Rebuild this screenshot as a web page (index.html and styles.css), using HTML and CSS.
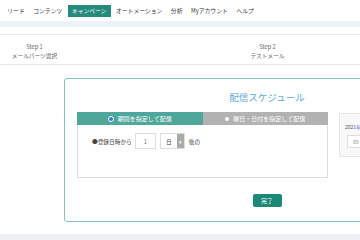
FILE: index.html
```html
<!DOCTYPE html>
<html lang="ja">
<head>
  <meta charset="UTF-8">
  <meta name="viewport" content="width=device-width, initial-scale=1.0">
  <title>配信スケジュール</title>
  <link rel="stylesheet" href="styles.css">
</head>
<body>
  <nav class="nav">
    <a class="nav-item">リード</a>
    <a class="nav-item">コンテンツ</a>
    <a class="nav-item active">キャンペーン</a>
    <a class="nav-item">オートメーション</a>
    <a class="nav-item">分析</a>
    <a class="nav-item">Myアカウント</a>
    <a class="nav-item">ヘルプ</a>
  </nav>
  <div class="nav-band"></div>

  <div class="steps">
    <div class="steps-row">
      <div class="step">
        <p class="step-no">Step 1</p>
        <p class="step-name">メールパーツ選択</p>
      </div>
      <div class="step">
        <p class="step-no">Step 2</p>
        <p class="step-name">テストメール</p>
      </div>
    </div>
  </div>

  <div class="card">
    <h2 class="card-title">配信スケジュール</h2>
    <div class="card-body">
      <div class="schedule">
        <div class="tabs">
          <div class="tab tab-on"><span class="radio radio-on"></span>期間を指定して配信</div>
          <div class="tab tab-off"><span class="radio radio-off"></span>曜日・日付を指定して配信</div>
        </div>
        <div class="tab-panel">
          <div class="row">
            <span>●登録日時から</span>
            <span class="num-box">1</span>
            <span class="select-box"><span class="select-val">日</span><span class="select-arrow">▾</span></span>
            <span>後の</span>
          </div>
        </div>
      </div>
      <div class="side">
        <p class="side-year">2021<span class="side-unit">年</span></p>
        <span class="side-input">09</span>
      </div>
    </div>
    <div class="actions">
      <button class="btn-done">完了</button>
    </div>
  </div>

  <div class="footer-band"></div>
</body>
</html>
```

FILE: styles.css
```css
body {
  font-family: "Noto Sans CJK JP", "Noto Sans", sans-serif;
  margin: 0;
  padding: 0;
  background-color: white;
  color: #333;
  width: 360px;
  height: 240px;
  overflow: hidden;
}
p {
  margin: 0;
}

/* ナビ */
.nav {
  height: 21px;
  display: flex;
  align-items: center;
  padding-left: 3px;
  font-size: 5.8px;
}
.nav-item {
  padding: 3px 4.3px;
  line-height: 6px;
  color: #333;
}
.nav-item.active {
  background-color: #268a7c;
  color: white;
  margin: 0 1px;
}
.nav-band {
  height: 6px;
  background-color: #eef1f5;
}

/* ステップ */
.steps {
  margin-top: 7px;
  border-top: 1px solid #e6e6e6;
  border-bottom: 1px solid #e6e6e6;
  height: 29px;
  overflow: hidden;
}
.steps-row {
  display: flex;
  margin-left: -82px;
}
.step {
  flex: none;
  width: 233px;
  text-align: center;
  font-size: 5.7px;
  color: #666;
  padding-top: 7px;
}
.step-no {
  line-height: 9px;
}
.step-name {
  line-height: 10px;
}

/* カード */
.card {
  margin: 13px 0 0 64px;
  width: 404px;
  height: 142px;
  border: 1px solid #80c6bd;
  border-radius: 3px;
}
.card-title {
  margin: 0;
  padding-top: 12px;
  text-align: center;
  font-size: 9.5px;
  font-weight: normal;
  color: #5aaadd;
  line-height: 12px;
}
.card-body {
  display: flex;
  gap: 11px;
  padding-left: 12px;
  margin-top: 9px;
}
.schedule {
  width: 251px;
}
.tabs {
  display: flex;
}
.tab {
  flex: 1;
  height: 13px;
  display: flex;
  align-items: center;
  justify-content: center;
  gap: 4px;
  font-size: 6px;
  color: white;
}
.tab-on {
  background-color: #4fa69a;
}
.tab-off {
  background-color: #b2b2b2;
}
.radio {
  width: 4px;
  height: 4px;
  border-radius: 50%;
}
.radio-on {
  background-color: #2b7de0;
  border: 1px solid white;
}
.radio-off {
  background-color: white;
  width: 4px;
  height: 4px;
}
.tab-panel {
  height: 53px;
  border: 1px solid #dcdcdc;
  border-top: none;
  padding: 8px 0 0 14px;
  box-sizing: border-box;
}
.row {
  display: flex;
  align-items: center;
  gap: 3px;
  font-size: 5.7px;
  color: #444;
}
.num-box {
  width: 21px;
  height: 16px;
  border: 1px solid #dedede;
  box-sizing: border-box;
  display: flex;
  align-items: center;
  justify-content: center;
  color: #777;
  margin-right: 1px;
}
.select-box {
  display: flex;
  width: 25px;
  height: 16px;
  border: 1px solid #dedede;
  box-sizing: border-box;
  margin-right: 1px;
}
.select-val {
  flex: 1;
  display: flex;
  align-items: center;
  justify-content: center;
}
.select-arrow {
  width: 7px;
  background-color: #aaa;
  color: white;
  font-size: 5px;
  display: flex;
  align-items: center;
  justify-content: center;
}

/* 右側パネル */
.side {
  margin-top: 1px;
  width: 120px;
  height: 44px;
  background-color: #f8f8f8;
  border: 1px solid #e6e6e6;
  box-sizing: border-box;
  padding: 10px 0 0 5px;
}
.side-year {
  font-size: 5px;
  color: #555;
  line-height: 6px;
}
.side-unit {
  color: #5a5adc;
}
.side-input {
  display: flex;
  align-items: center;
  margin: 5px 0 0 2px;
  width: 40px;
  height: 13px;
  background-color: white;
  border: 1px solid #dedede;
  box-sizing: border-box;
  padding-left: 5px;
  font-size: 5px;
  color: #888;
}

.actions {
  display: flex;
  justify-content: center;
  margin-top: 16px;
}
.btn-done {
  width: 29px;
  height: 13px;
  padding: 0;
  border: none;
  border-radius: 2px;
  background-color: #198a78;
  color: white;
  font-family: inherit;
  font-size: 6px;
}

.footer-band {
  margin-top: 12px;
  height: 8px;
  background-color: #edf0f4;
}
```
